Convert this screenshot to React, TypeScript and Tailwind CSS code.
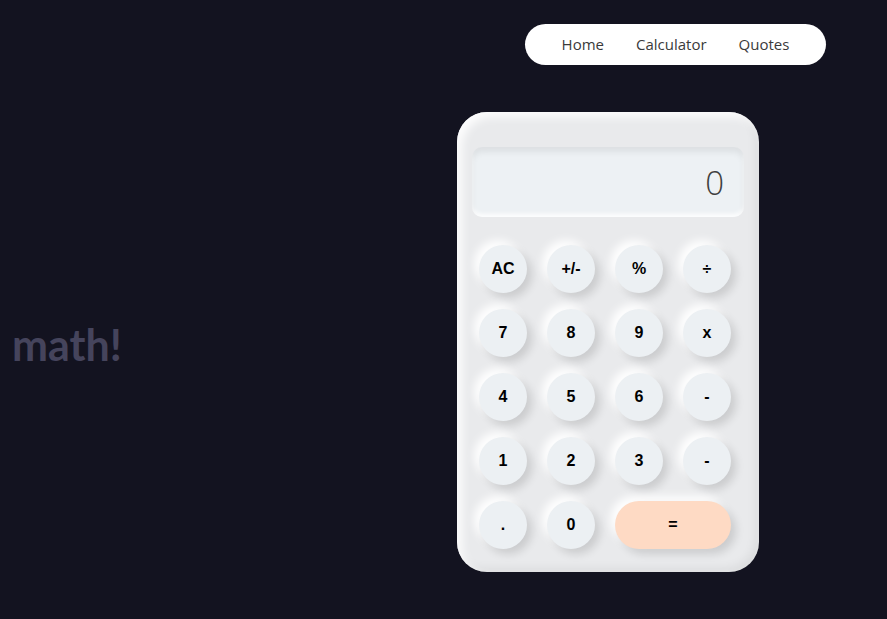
import React from "react"

const keys = ["AC", "+/-", "%", "÷", "7", "8", "9", "x", "4", "5", "6", "-", "1", "2", "3", "-", ".", "0"]

function Key({ label }: { label: string }) {
    return (
        <button className="size-12 rounded-full bg-[#ecf0f3] flex items-center justify-center text-[16px] font-bold text-black font-['Liberation_Sans',Arial,sans-serif] shadow-[5px_5px_9px_rgba(0,0,0,0.13),-5px_-5px_9px_rgba(255,255,255,0.95)]">
            {label}
        </button>
    )
}

export default function App() {
    return (
        <div className="w-full h-[619px] bg-[#131320] overflow-hidden">
            <div className="flex justify-end pr-[61px] pt-6">
                <nav className="w-[301px] h-[41px] bg-white rounded-full flex items-center justify-center gap-8 text-[15px] text-[#3a3a3a] font-['Open_Sans',sans-serif]">
                    <a>Home</a>
                    <a>Calculator</a>
                    <a>Quotes</a>
                </nav>
            </div>

            <div className="flex items-center justify-between pl-3 pr-[128px] mt-[47px]">
                <h1 className="text-[43px] font-bold text-[#45445c] font-['Lato',sans-serif] leading-none mt-1">math!</h1>

                <div className="w-[302px] h-[460px] rounded-[30px] bg-[#e9eaec] px-[15px] pt-[35px] shadow-[inset_5px_5px_10px_rgba(255,255,255,0.9),inset_-4px_-4px_10px_rgba(0,0,0,0.06)]">
                    <div className="h-[70px] rounded-[10px] bg-[#edf1f4] flex items-center justify-end pr-5 shadow-[inset_0_5px_6px_rgba(0,0,0,0.07),inset_0_-3px_4px_rgba(255,255,255,0.9)]">
                        <span className="text-[33px] font-light text-[#3f3f3f] font-['Open_Sans',sans-serif] leading-none">0</span>
                    </div>

                    <div className="ml-[7px] mt-[28px] grid grid-cols-[repeat(4,48px)] gap-x-5 gap-y-4">
                        {keys.map((k, i) => (
                            <Key key={i} label={k} />
                        ))}
                        <button className="col-span-2 h-12 rounded-full bg-[#fedac4] flex items-center justify-center text-[16px] font-bold text-black font-['Liberation_Sans',Arial,sans-serif] shadow-[5px_5px_9px_rgba(0,0,0,0.13),-5px_-5px_9px_rgba(255,255,255,0.95)]">
                            =
                        </button>
                    </div>
                </div>
            </div>
        </div>
    )
}
